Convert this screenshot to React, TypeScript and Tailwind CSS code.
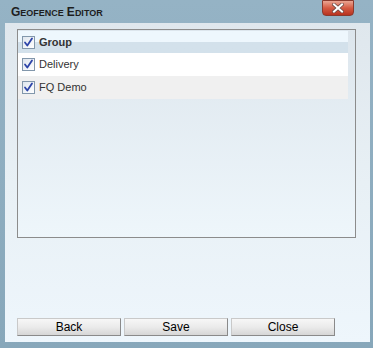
import React from "react";

function Check() {
  return (
    <span className="w-[13px] h-[13px] shrink-0 border border-[#8297ab] bg-gradient-to-br from-[#dfe6ee] to-[#ffffff] flex items-center justify-center">
      <svg width="11" height="11" viewBox="0 0 11 11">
        <path d="M2 5.5 L4.3 8.5 L9 1.5" fill="none" stroke="#2d44a8" strokeWidth="1.8" strokeLinecap="round" strokeLinejoin="round" />
      </svg>
    </span>
  );
}

function Btn({ label }: { label: string }) {
  return (
    <div className="w-[104px] h-[18px] flex items-center justify-center text-[12px] text-black bg-gradient-to-b from-[#f7f7f7] via-[#ebebeb] to-[#d6d6d6] border border-[#c9c9c9] border-r-[#8a8a8a] border-b-[#8a8a8a]">
      {label}
    </div>
  );
}

export default function App() {
  return (
    <div
      className="relative w-[373px] h-[348px] overflow-hidden bg-gradient-to-b from-[#95b3c5] to-[#87a7ba]"
      style={{ fontFamily: '"Liberation Sans", Arial, sans-serif' }}
    >
      <div className="h-[23px] flex items-end pb-[5px] pl-[11px] font-bold text-[#1e1e1e] leading-none">
        <span className="text-[12px]">G</span>
        <span className="text-[9px]">EOFENCE</span>
        <span className="text-[12px] ml-[3px]">E</span>
        <span className="text-[9px]">DITOR</span>
      </div>
      <div className="absolute left-[322px] top-0 w-[32px] h-[16px] rounded-b-[4px] border border-[#8b3a2e] bg-gradient-to-b from-[#e9a593] via-[#d45a43] to-[#b8321f] flex items-center justify-center">
        <svg width="12" height="10" viewBox="0 0 12 10">
          <path d="M2 1.5 L10 8.5 M10 1.5 L2 8.5" stroke="#6e4a45" strokeWidth="3.6" strokeLinecap="square" />
          <path d="M2 1.5 L10 8.5 M10 1.5 L2 8.5" stroke="#ffffff" strokeWidth="2" strokeLinecap="square" />
        </svg>
      </div>
      <div className="ml-[5px] w-[365px] h-[319px] bg-gradient-to-b from-[#dfe7ed] via-[#e8f0f5] to-[#eef6fc] pt-[6px] pl-[12px] flex flex-col">
        <div className="w-[339px] h-[209px] border border-[#8c8c8c] bg-gradient-to-b from-[#dde6ed] to-[#eef6fb] pt-[1px]">
          <div className="w-[330px] h-[22px] flex items-center pl-[4px] gap-[4px] bg-gradient-to-b from-[#eef7fd] from-50% to-[#d3e1eb] to-50% text-[11px] font-bold text-[#333]">
            <Check />
            <span>Group</span>
          </div>
          <div className="w-[330px] h-[23px] flex items-center pl-[4px] gap-[4px] bg-white text-[11px] text-[#333]">
            <Check />
            <span>Delivery</span>
          </div>
          <div className="w-[330px] h-[23px] flex items-center pl-[4px] gap-[4px] bg-[#f0f0f0] text-[11px] text-[#333]">
            <Check />
            <span>FQ Demo</span>
          </div>
        </div>
        <div className="mt-[80px] flex gap-[3px]">
          <Btn label="Back" />
          <Btn label="Save" />
          <Btn label="Close" />
        </div>
      </div>
    </div>
  );
}
